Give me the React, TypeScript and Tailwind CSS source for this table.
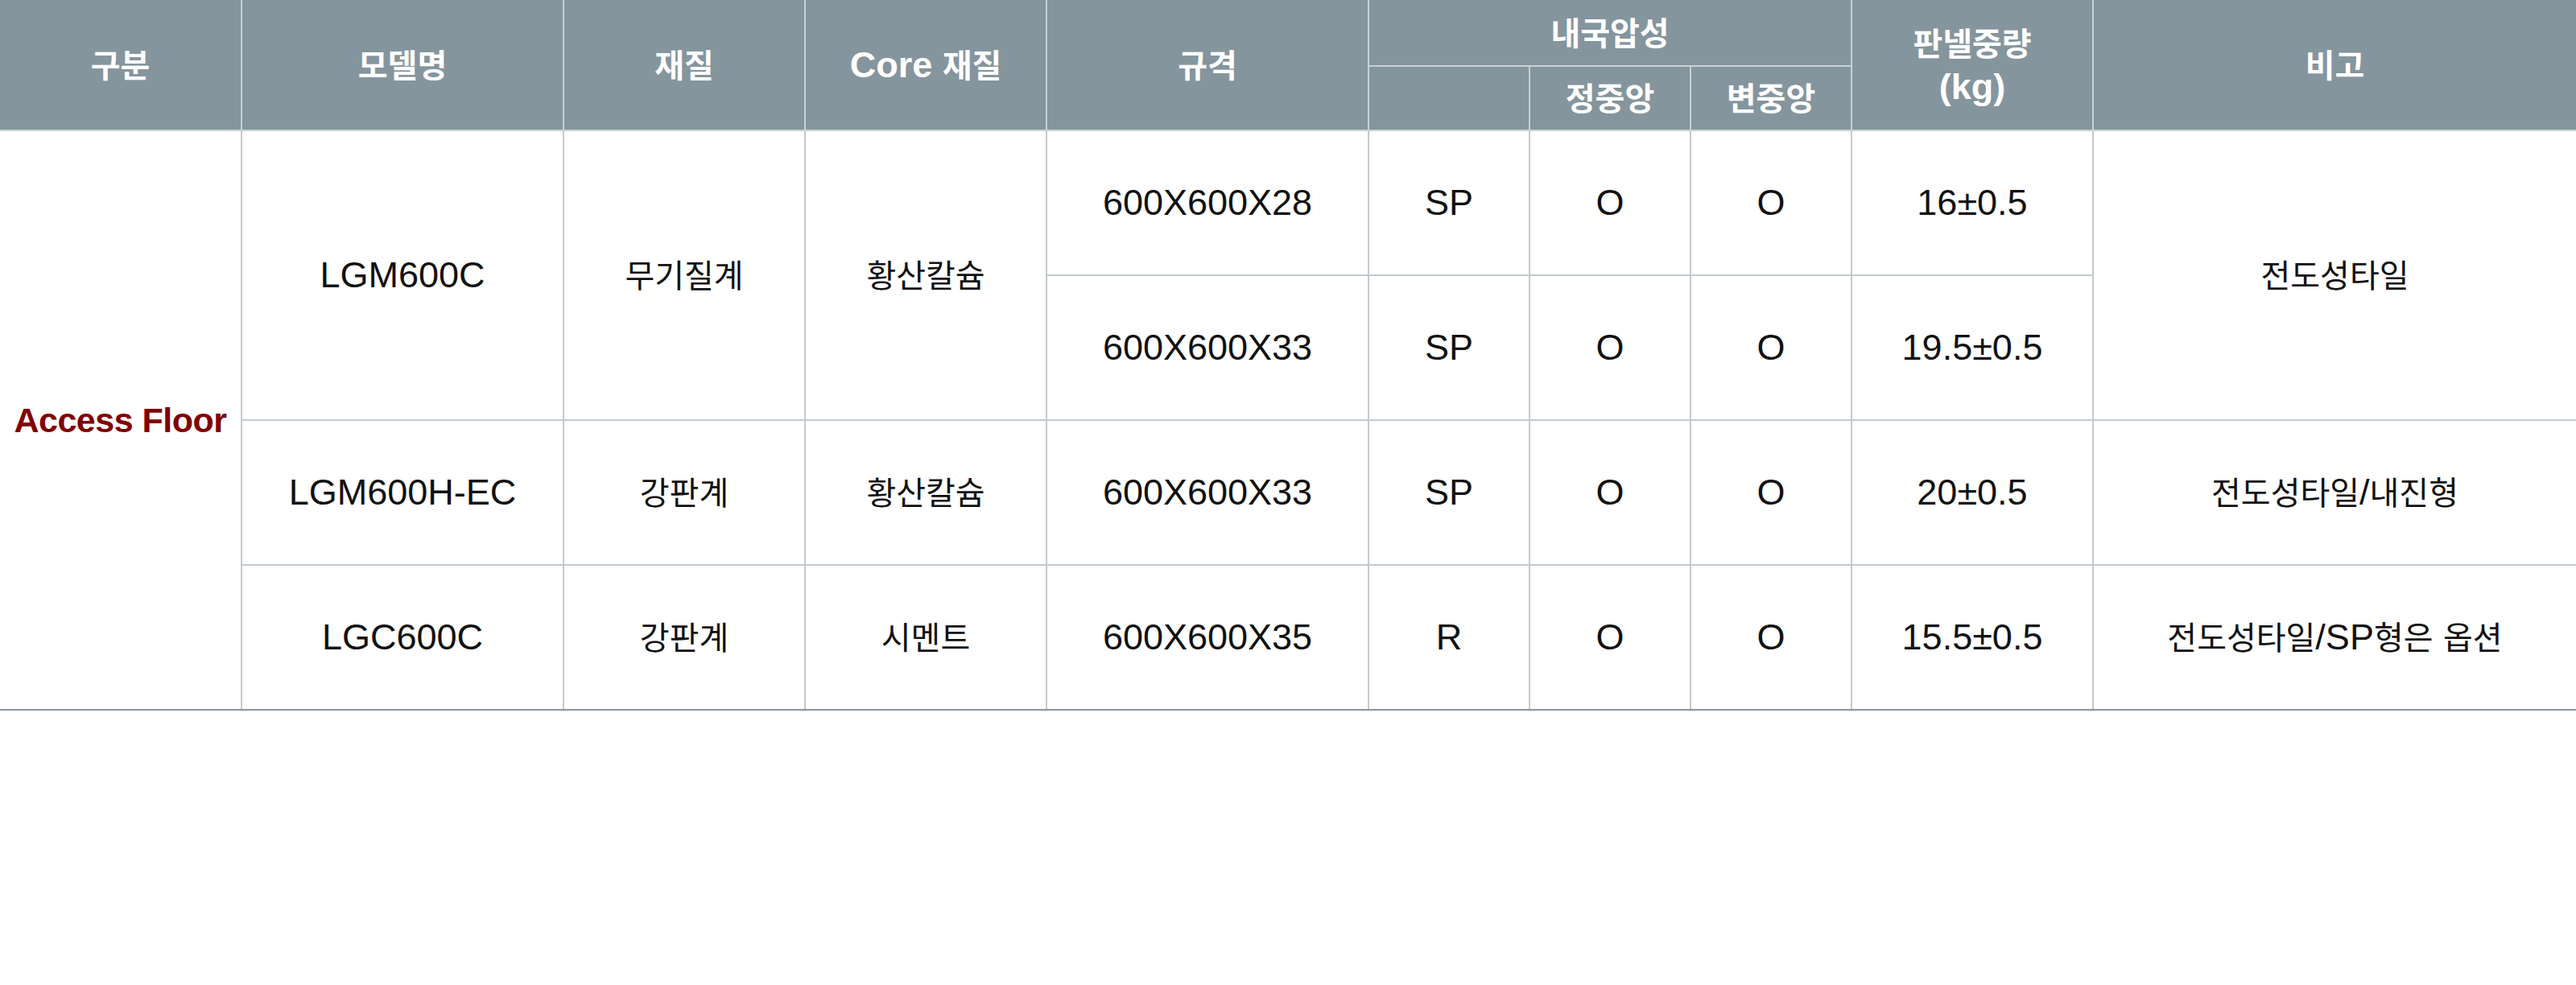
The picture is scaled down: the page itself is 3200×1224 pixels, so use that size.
import type { ReactNode } from "react";

const HANGUL = /([\uAC00-\uD7A3\u3131-\u318E]+)/;

// hangul runs come out a bit smaller than the latin glyphs in the reference
function T({ children }: { children: string }) {
  const parts = children.split(HANGUL);
  return (
    <>
      {parts.map((p, i) =>
        HANGUL.test(p) ? (
          <span key={i} className="text-[40px]">
            {p}
          </span>
        ) : (
          <span key={i}>{p}</span>
        )
      )}
    </>
  );
}

const th =
  "border-2 border-[#c8d0d4] bg-[#85959d] text-center align-middle font-bold text-white";
const td = "border-2 border-[#c3cbcf] text-center align-middle text-[#111]";
const last = "border-b-[#87959d]!";

function H({
  children,
  rowSpan,
  colSpan,
  className = "",
}: {
  children?: ReactNode;
  rowSpan?: number;
  colSpan?: number;
  className?: string;
}) {
  return (
    <th rowSpan={rowSpan} colSpan={colSpan} className={`${th} ${className}`}>
      {children}
    </th>
  );
}

function D({
  children,
  rowSpan,
  className = "",
}: {
  children?: string;
  rowSpan?: number;
  className?: string;
}) {
  return (
    <td rowSpan={rowSpan} className={`${td} ${className}`}>
      {children ? <T>{children}</T> : null}
    </td>
  );
}

export default function App() {
  return (
    <div className="min-h-screen w-[3200px] bg-white font-['Liberation_Sans','Noto_Sans_CJK_KR',sans-serif] text-[45px]">
      <table className="w-[3200px] table-fixed border-collapse">
        <colgroup>
          <col className="w-[300px]" />
          <col className="w-[400px]" />
          <col className="w-[300px]" />
          <col className="w-[300px]" />
          <col className="w-[400px]" />
          <col className="w-[200px]" />
          <col className="w-[200px]" />
          <col className="w-[200px]" />
          <col className="w-[300px]" />
          <col className="w-[600px]" />
        </colgroup>
        <thead>
          <tr className="h-[82px]">
            <H rowSpan={2} className="border-t-0 border-l-0">
              <T>구분</T>
            </H>
            <H rowSpan={2} className="border-t-0">
              <T>모델명</T>
            </H>
            <H rowSpan={2} className="border-t-0">
              <T>재질</T>
            </H>
            <H rowSpan={2} className="border-t-0">
              <T>Core 재질</T>
            </H>
            <H rowSpan={2} className="border-t-0">
              <T>규격</T>
            </H>
            <H colSpan={3} className="border-t-0">
              <T>내국압성</T>
            </H>
            <H rowSpan={2} className="border-t-0 leading-[1.2]">
              <T>판넬중량</T>
              <br />
              (kg)
            </H>
            <H rowSpan={2} className="border-t-0 border-r-0">
              <T>비고</T>
            </H>
          </tr>
          <tr className="h-[80px]">
            <H />
            <H>
              <T>정중앙</T>
            </H>
            <H>
              <T>변중앙</T>
            </H>
          </tr>
        </thead>
        <tbody>
          <tr className="h-[180px]">
            <td
              rowSpan={4}
              className={`${td} ${last} border-l-0 text-[43px] font-bold tracking-[-0.5px] text-[#800000]`}
            >
              Access Floor
            </td>
            <D rowSpan={2}>LGM600C</D>
            <D rowSpan={2}>무기질계</D>
            <D rowSpan={2}>황산칼슘</D>
            <D>600X600X28</D>
            <D>SP</D>
            <D>O</D>
            <D>O</D>
            <D>16±0.5</D>
            <D rowSpan={2} className="border-r-0">
              전도성타일
            </D>
          </tr>
          <tr className="h-[180px]">
            <D>600X600X33</D>
            <D>SP</D>
            <D>O</D>
            <D>O</D>
            <D>19.5±0.5</D>
          </tr>
          <tr className="h-[180px]">
            <D>LGM600H-EC</D>
            <D>강판계</D>
            <D>황산칼슘</D>
            <D>600X600X33</D>
            <D>SP</D>
            <D>O</D>
            <D>O</D>
            <D>20±0.5</D>
            <D className="border-r-0">전도성타일/내진형</D>
          </tr>
          <tr className="h-[180px]">
            <D className={last}>LGC600C</D>
            <D className={last}>강판계</D>
            <D className={last}>시멘트</D>
            <D className={last}>600X600X35</D>
            <D className={last}>R</D>
            <D className={last}>O</D>
            <D className={last}>O</D>
            <D className={last}>15.5±0.5</D>
            <D className={`${last} border-r-0`}>전도성타일/SP형은 옵션</D>
          </tr>
        </tbody>
      </table>
    </div>
  );
}
